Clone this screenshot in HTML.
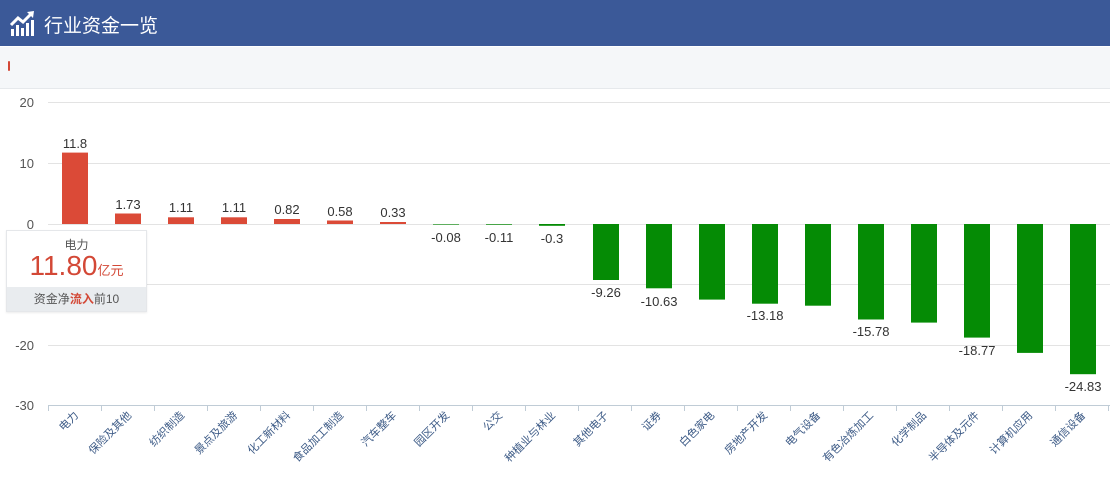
<!DOCTYPE html>
<html><head><meta charset="utf-8"><style>
body{margin:0;width:1110px;height:477px;overflow:hidden;background:#fff;font-family:"Liberation Sans","Noto Sans CJK SC",sans-serif}
.hd{position:absolute;left:0;top:0;width:1110px;height:46px;background:#3b5998;color:#fff;font-size:19px}
.hd span{position:absolute;left:44px;top:11px}
.sub{position:absolute;left:0;top:47px;width:1110px;height:41px;background:#f5f7f9;border-bottom:1px solid #e6e9ec}
.tip{position:absolute;left:6px;top:230px;width:139px;height:80px;background:#fff;border:1px solid #e5e7ea;box-shadow:0 1px 2px rgba(0,0,0,.08)}
.tip .t{position:absolute;top:5px;width:100%;text-align:center;font-size:12px;color:#555}
.tip .v{position:absolute;top:19px;width:100%;text-align:center;color:#d34836;font-size:28px}
.tip .v small{font-size:13px}
.tip .b{position:absolute;left:0;bottom:0;width:100%;height:24px;background:#e9ecef;text-align:center;font-size:12px;line-height:24px;color:#555}
.tip .b em{font-style:normal;color:#d34836;font-weight:bold}
</style></head><body>
<div class="hd"><svg style="position:absolute;left:9px;top:9px" width="28" height="28" viewBox="0 0 28 28"><path d="M2 16 L9 9 L14 13 L22 5" stroke="#fff" stroke-width="3" fill="none"/><path d="M18 3 L25 2 L24 9 Z" fill="#fff"/><rect x="2" y="20" width="3" height="7" fill="#fff"/><rect x="7" y="16" width="3" height="11" fill="#fff"/><rect x="12" y="19" width="3" height="8" fill="#fff"/><rect x="17" y="14" width="3" height="13" fill="#fff"/><rect x="22" y="11" width="3" height="16" fill="#fff"/></svg><span>行业资金一览</span></div>
<div class="sub"><div style="position:absolute;left:8px;top:14px;width:2px;height:10px;background:#d34836;border-radius:1px"></div></div>
<svg style="position:absolute;left:0;top:0" width="1110" height="477">
<g stroke="#e3e3e3" stroke-width="1">
<line x1="48" y1="102.5" x2="1110" y2="102.5"/><line x1="48" y1="163.5" x2="1110" y2="163.5"/><line x1="48" y1="224.5" x2="1110" y2="224.5"/><line x1="48" y1="284.5" x2="1110" y2="284.5"/><line x1="48" y1="345.5" x2="1110" y2="345.5"/></g>
<line x1="48" y1="405.5" x2="1110" y2="405.5" stroke="#c0ccd6"/>
<g stroke="#c0ccd6"><line x1="48.5" y1="405" x2="48.5" y2="411"/><line x1="101.5" y1="405" x2="101.5" y2="411"/><line x1="154.5" y1="405" x2="154.5" y2="411"/><line x1="207.5" y1="405" x2="207.5" y2="411"/><line x1="260.5" y1="405" x2="260.5" y2="411"/><line x1="313.5" y1="405" x2="313.5" y2="411"/><line x1="366.5" y1="405" x2="366.5" y2="411"/><line x1="419.5" y1="405" x2="419.5" y2="411"/><line x1="472.5" y1="405" x2="472.5" y2="411"/><line x1="525.5" y1="405" x2="525.5" y2="411"/><line x1="578.5" y1="405" x2="578.5" y2="411"/><line x1="631.5" y1="405" x2="631.5" y2="411"/><line x1="684.5" y1="405" x2="684.5" y2="411"/><line x1="737.5" y1="405" x2="737.5" y2="411"/><line x1="790.5" y1="405" x2="790.5" y2="411"/><line x1="843.5" y1="405" x2="843.5" y2="411"/><line x1="896.5" y1="405" x2="896.5" y2="411"/><line x1="949.5" y1="405" x2="949.5" y2="411"/><line x1="1002.5" y1="405" x2="1002.5" y2="411"/><line x1="1055.5" y1="405" x2="1055.5" y2="411"/><line x1="1108.5" y1="405" x2="1108.5" y2="411"/></g>
<g font-size="13" fill="#555" text-anchor="end" font-family="Liberation Sans,sans-serif">
<text x="34" y="107">20</text><text x="34" y="168">10</text><text x="34" y="229">0</text><text x="34" y="289">-10</text><text x="34" y="350">-20</text><text x="34" y="410">-30</text></g>
<g fill="#db4a37">
<rect x="62" y="152.6" width="26" height="71.4"/><rect x="115" y="213.5" width="26" height="10.5"/><rect x="168" y="217.3" width="26" height="6.7"/><rect x="221" y="217.3" width="26" height="6.7"/><rect x="274" y="219" width="26" height="5"/><rect x="327" y="220.5" width="26" height="3.5"/><rect x="380" y="222" width="26" height="2"/></g>
<g fill="#058b05">
<rect x="433" y="224" width="26" height="0.6"/><rect x="486" y="224" width="26" height="0.7"/><rect x="539" y="224" width="26" height="1.8"/><rect x="593" y="224" width="26" height="56"/><rect x="646" y="224" width="26" height="64.3"/><rect x="699" y="224" width="26" height="75.6"/><rect x="752" y="224" width="26" height="79.7"/><rect x="805" y="224" width="26" height="81.7"/><rect x="858" y="224" width="26" height="95.5"/><rect x="911" y="224" width="26" height="98.6"/><rect x="964" y="224" width="26" height="113.6"/><rect x="1017" y="224" width="26" height="128.9"/><rect x="1070" y="224" width="26" height="150.2"/></g>
<g font-size="13" fill="#333" text-anchor="middle" font-family="Liberation Sans,sans-serif">
<text x="75" y="148">11.8</text><text x="128" y="209">1.73</text><text x="181" y="212">1.11</text><text x="234" y="212">1.11</text><text x="287" y="214">0.82</text><text x="340" y="216">0.58</text><text x="393" y="217">0.33</text>
<text x="446" y="242">-0.08</text><text x="499" y="242">-0.11</text><text x="552" y="243">-0.3</text><text x="606" y="297">-9.26</text><text x="659" y="306">-10.63</text><text x="765" y="320">-13.18</text><text x="871" y="336">-15.78</text><text x="977" y="355">-18.77</text><text x="1083" y="391">-24.83</text></g>
<g font-size="11" fill="#3c5a86" text-anchor="end" font-family="Liberation Sans,Noto Sans CJK SC,sans-serif">
<text transform="translate(79,416) rotate(-45)">电力</text>
<text transform="translate(132,416) rotate(-45)">保险及其他</text>
<text transform="translate(185,416) rotate(-45)">纺织制造</text>
<text transform="translate(238,416) rotate(-45)">景点及旅游</text>
<text transform="translate(291,416) rotate(-45)">化工新材料</text>
<text transform="translate(344,416) rotate(-45)">食品加工制造</text>
<text transform="translate(397,416) rotate(-45)">汽车整车</text>
<text transform="translate(450,416) rotate(-45)">园区开发</text>
<text transform="translate(503,416) rotate(-45)">公交</text>
<text transform="translate(556,416) rotate(-45)">种植业与林业</text>
<text transform="translate(609,416) rotate(-45)">其他电子</text>
<text transform="translate(662,416) rotate(-45)">证券</text>
<text transform="translate(715,416) rotate(-45)">白色家电</text>
<text transform="translate(768,416) rotate(-45)">房地产开发</text>
<text transform="translate(821,416) rotate(-45)">电气设备</text>
<text transform="translate(874,416) rotate(-45)">有色冶炼加工</text>
<text transform="translate(927,416) rotate(-45)">化学制品</text>
<text transform="translate(980,416) rotate(-45)">半导体及元件</text>
<text transform="translate(1033,416) rotate(-45)">计算机应用</text>
<text transform="translate(1086,416) rotate(-45)">通信设备</text></g>
</svg>
<div class="tip"><div class="t">电力</div><div class="v">11.80<small>亿元</small></div><div class="b">资金净<em>流入</em>前10</div></div>
</body></html>
